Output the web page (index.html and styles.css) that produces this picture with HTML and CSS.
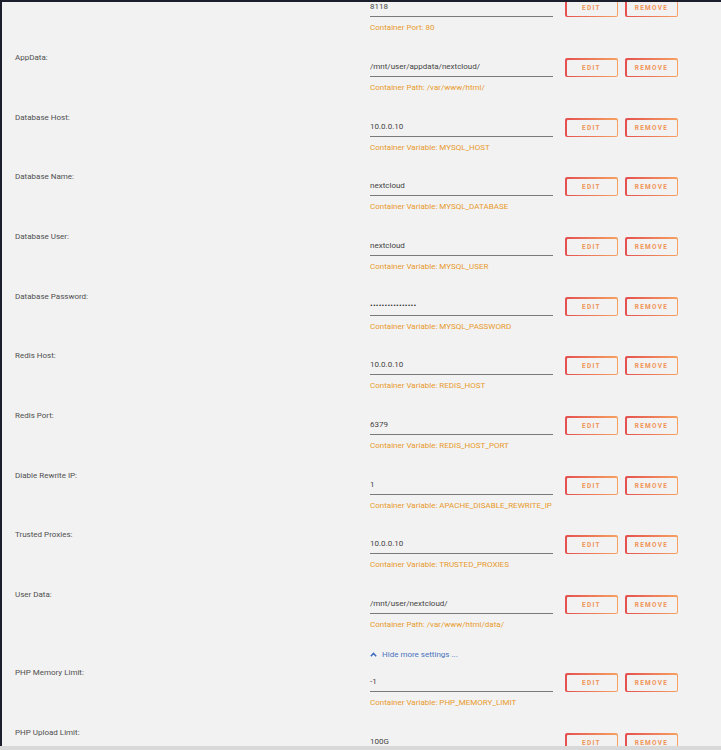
FILE: index.html
```html
<!DOCTYPE html>
<html>
<head>
<meta charset="utf-8">
<link rel="stylesheet" href="styles.css">
</head>
<body>
<div class="frame">
  <div class="list">
    <div class="row">
      <div class="label"></div>
      <div class="field"><div class="input">8118</div><div class="hint">Container Port: 80</div></div>
      <div class="btns"><span class="btn"><span>EDIT</span></span><span class="btn"><span>REMOVE</span></span></div>
    </div>
    <div class="row">
      <div class="label">AppData:</div>
      <div class="field"><div class="input">/mnt/user/appdata/nextcloud/</div><div class="hint">Container Path: /var/www/html/</div></div>
      <div class="btns"><span class="btn"><span>EDIT</span></span><span class="btn"><span>REMOVE</span></span></div>
    </div>
    <div class="row short">
      <div class="label">Database Host:</div>
      <div class="field"><div class="input">10.0.0.10</div><div class="hint">Container Variable: MYSQL_HOST</div></div>
      <div class="btns"><span class="btn"><span>EDIT</span></span><span class="btn"><span>REMOVE</span></span></div>
    </div>
    <div class="row">
      <div class="label">Database Name:</div>
      <div class="field"><div class="input">nextcloud</div><div class="hint">Container Variable: MYSQL_DATABASE</div></div>
      <div class="btns"><span class="btn"><span>EDIT</span></span><span class="btn"><span>REMOVE</span></span></div>
    </div>
    <div class="row">
      <div class="label">Database User:</div>
      <div class="field"><div class="input">nextcloud</div><div class="hint">Container Variable: MYSQL_USER</div></div>
      <div class="btns"><span class="btn"><span>EDIT</span></span><span class="btn"><span>REMOVE</span></span></div>
    </div>
    <div class="row short">
      <div class="label">Database Password:</div>
      <div class="field"><div class="input dots">••••••••••••••••</div><div class="hint">Container Variable: MYSQL_PASSWORD</div></div>
      <div class="btns"><span class="btn"><span>EDIT</span></span><span class="btn"><span>REMOVE</span></span></div>
    </div>
    <div class="row">
      <div class="label">Redis Host:</div>
      <div class="field"><div class="input">10.0.0.10</div><div class="hint">Container Variable: REDIS_HOST</div></div>
      <div class="btns"><span class="btn"><span>EDIT</span></span><span class="btn"><span>REMOVE</span></span></div>
    </div>
    <div class="row">
      <div class="label">Redis Port:</div>
      <div class="field"><div class="input">6379</div><div class="hint">Container Variable: REDIS_HOST_PORT</div></div>
      <div class="btns"><span class="btn"><span>EDIT</span></span><span class="btn"><span>REMOVE</span></span></div>
    </div>
    <div class="row short">
      <div class="label">Diable Rewrite IP:</div>
      <div class="field"><div class="input">1</div><div class="hint">Container Variable: APACHE_DISABLE_REWRITE_IP</div></div>
      <div class="btns"><span class="btn"><span>EDIT</span></span><span class="btn"><span>REMOVE</span></span></div>
    </div>
    <div class="row">
      <div class="label">Trusted Proxies:</div>
      <div class="field"><div class="input">10.0.0.10</div><div class="hint">Container Variable: TRUSTED_PROXIES</div></div>
      <div class="btns"><span class="btn"><span>EDIT</span></span><span class="btn"><span>REMOVE</span></span></div>
    </div>
    <div class="row">
      <div class="label">User Data:</div>
      <div class="field"><div class="input">/mnt/user/nextcloud/</div><div class="hint">Container Path: /var/www/html/data/</div></div>
      <div class="btns"><span class="btn"><span>EDIT</span></span><span class="btn"><span>REMOVE</span></span></div>
    </div>
    <div class="more">
      <svg class="chev" width="7" height="5" viewBox="0 0 7 5"><path d="M0.8 4.2 L3.5 1.4 L6.2 4.2" fill="none" stroke="#3f6cc0" stroke-width="1.5"/></svg>
      <span>Hide more settings ...</span>
    </div>
    <div class="row">
      <div class="label">PHP Memory Limit:</div>
      <div class="field"><div class="input">-1</div><div class="hint">Container Variable: PHP_MEMORY_LIMIT</div></div>
      <div class="btns"><span class="btn"><span>EDIT</span></span><span class="btn"><span>REMOVE</span></span></div>
    </div>
    <div class="row">
      <div class="label">PHP Upload Limit:</div>
      <div class="field"><div class="input">100G</div></div>
      <div class="btns"><span class="btn"><span>EDIT</span></span><span class="btn"><span>REMOVE</span></span></div>
    </div>
  </div>
</div>
<div class="bottom-bar"></div>
</body>
</html>
```
FILE: styles.css
```css
html, body {
  margin: 0;
  padding: 0;
  height: 750px;
  overflow: hidden;
  background: #f2f2f2;
}
body {
  font-family: Roboto, "Open Sans", "DejaVu Sans", sans-serif;
}
.frame {
  height: 746px;
  border-top: 2px solid #1c1f2b;
  border-left: 2px solid #1c1f2b;
  box-sizing: border-box;
  overflow: hidden;
  background: #f2f2f2;
}
.list {
  margin-top: -10px;
}
.row {
  display: flex;
  height: 60px;
  padding-left: 13px;
}
.row.short {
  height: 59px;
}
.label {
  width: 355px;
  flex: none;
  font-size: 8px;
  line-height: 10px;
  padding-top: 1px;
  color: #505050;
}
.field {
  width: 183px;
  flex: none;
}
.input {
  margin-top: 9px;
  font-size: 8px;
  line-height: 12px;
  padding-bottom: 3px;
  color: #444;
  border-bottom: 1px solid #7a7a7a;
}
.input.dots {
  letter-spacing: 0.2px;
  color: #333;
}
.hint {
  margin-top: 6px;
  font-size: 8px;
  line-height: 10px;
  color: #e89a2c;
  white-space: nowrap;
}
.btns {
  display: flex;
  gap: 7px;
  margin-left: 12px;
  padding-top: 6px;
  align-items: flex-start;
}
.btn {
  box-sizing: border-box;
  width: 53px;
  height: 19px;
  padding: 1.5px;
  border-radius: 2px;
  background: linear-gradient(90deg, #e45050, #f6a262);
  display: flex;
}
.btn span {
  flex: 1;
  border-radius: 1px;
  background: #f2f2f2;
  display: flex;
  align-items: center;
  justify-content: center;
  font-size: 6.5px;
  font-weight: 700;
  letter-spacing: 1.3px;
  color: #f09458;
}
.more {
  height: 18px;
  padding-left: 368px;
  display: flex;
  align-items: flex-start;
  gap: 5px;
  font-size: 8px;
  line-height: 11px;
  color: #4a72bd;
}
.chev {
  margin-top: 3px;
}
.bottom-bar {
  height: 4px;
  background: #d9d9d9;
}
```
